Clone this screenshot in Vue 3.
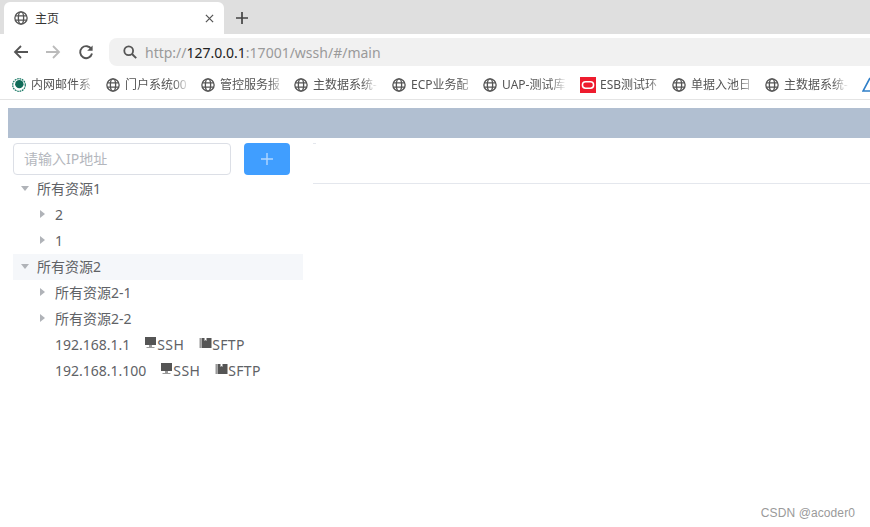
<script setup>
const bookmarks = [
  { label: '内网邮件系', icon: 'mail', width: 94 },
  { label: '门户系统00', icon: 'globe', width: 95 },
  { label: '管控服务报', icon: 'globe', width: 93 },
  { label: '主数据系统-', icon: 'globe', width: 98 },
  { label: 'ECP业务配', icon: 'globe', width: 91 },
  { label: 'UAP-测试库', icon: 'globe', width: 97 },
  { label: 'ESB测试环', icon: 'oracle', width: 92 },
  { label: '单据入池日', icon: 'globe', width: 93 },
  { label: '主数据系统-', icon: 'globe', width: 97 },
]
const tree = [
  { label: '所有资源1', level: 0, arrow: 'down' },
  { label: '2', level: 1, arrow: 'right' },
  { label: '1', level: 1, arrow: 'right' },
  { label: '所有资源2', level: 0, arrow: 'down', active: true },
  { label: '所有资源2-1', level: 1, arrow: 'right' },
  { label: '所有资源2-2', level: 1, arrow: 'right' },
  { label: '192.168.1.1', level: 1, host: true },
  { label: '192.168.1.100', level: 1, host: true },
]
</script>

<template>
  <div class="page">
    <div class="tabstrip">
      <div class="tab">
        <svg class="globe" viewBox="0 0 16 16"><g fill="none" stroke="#555" stroke-width="1.5"><circle cx="8" cy="8" r="7"/><ellipse cx="8" cy="8" rx="3" ry="7"/><path d="M1.4 5.5h13.2M1.4 10.5h13.2"/></g></svg>
        <span class="tab-title">主页</span>
        <svg class="tab-close" viewBox="0 0 10 10"><path d="M1 1l8 8M9 1l-8 8" stroke="#555" stroke-width="1.4" fill="none"/></svg>
      </div>
      <svg class="newtab" viewBox="0 0 12 12"><path d="M6 0v12M0 6h12" stroke="#444" stroke-width="1.7" fill="none"/></svg>
    </div>

    <div class="toolbar">
      <div class="navs">
        <svg viewBox="0 0 16 16"><path d="M15 8H2M8 2L2 8l6 6" stroke="#555" stroke-width="1.8" fill="none"/></svg>
        <svg viewBox="0 0 16 16"><path d="M1 8h13M8 2l6 6-6 6" stroke="#bbb" stroke-width="1.8" fill="none"/></svg>
        <svg class="reload" viewBox="0 0 16 16"><path d="M13.4 5.2A6 6 0 1 0 14 9.6" stroke="#555" stroke-width="1.9" fill="none"/><path d="M14.6 1.4v5.4H9.2z" fill="#555"/></svg>
      </div>
      <div class="omnibox">
        <svg class="search" viewBox="0 0 14 14"><circle cx="5.7" cy="5.7" r="4.4" stroke="#555" stroke-width="1.8" fill="none"/><path d="M9 9l4.2 4.2" stroke="#555" stroke-width="1.9"/></svg>
        <span class="url">http://<b>127.0.0.1</b>:17001/wssh/#/main</span>
      </div>
    </div>

    <div class="bookmarks">
      <div v-for="(b, i) in bookmarks" :key="i" class="bookmark" :style="{ width: b.width + 'px' }">
        <svg v-if="b.icon === 'globe'" class="bm-icon" viewBox="0 0 16 16"><g fill="none" stroke="#555" stroke-width="1.5"><circle cx="8" cy="8" r="7"/><ellipse cx="8" cy="8" rx="3" ry="7"/><path d="M1.4 5.5h13.2M1.4 10.5h13.2"/></g></svg>
        <svg v-else-if="b.icon === 'mail'" class="bm-icon" viewBox="0 0 16 16"><circle cx="8" cy="8" r="7.2" fill="none" stroke="#1b7a66" stroke-width="1.4" stroke-dasharray="2 .8"/><circle cx="8.4" cy="7" r="4.8" fill="#0f6b58"/></svg>
        <svg v-else class="bm-icon oracle" viewBox="0 0 16 16"><rect width="16" height="16" fill="#ee1c2e"/><rect x="2.4" y="4.8" width="11.2" height="6.4" rx="3.2" fill="none" stroke="#fff" stroke-width="1.5"/></svg>
        <span class="bm-label">{{ b.label }}</span>
      </div>
      <svg class="bm-edge" viewBox="0 0 10 16"><path d="M8 1L1 14h9" fill="none" stroke="#2f7fc8" stroke-width="1.6"/></svg>
    </div>

    <div class="app">
      <div class="banner"></div>
      <div class="main">
        <aside class="side">
          <div class="search-row">
            <input class="ip" type="text" placeholder="请输入IP地址" />
            <button class="add" type="button">
              <svg viewBox="0 0 12 12"><path d="M6 0v12M0 6h12" stroke="#b3d8ff" stroke-width="1.4" fill="none"/></svg>
            </button>
          </div>
          <div class="tree">
            <div
              v-for="(n, i) in tree"
              :key="i"
              class="node"
              :class="['lv' + n.level, { active: n.active }]"
            >
              <span class="caret" :class="n.arrow"></span>
              <span class="label">{{ n.label }}</span>
              <template v-if="n.host">
                <span class="conn first">
                  <svg viewBox="0 0 13 12"><path d="M1 0h11v8H1z" fill="#555"/><path d="M5 8h3v2h2.5v1h-8v-1H5z" fill="#999"/></svg>SSH
                </span>
                <span class="conn second">
                  <svg viewBox="0 0 12 12"><path d="M0 1h1.5v10H0z" fill="#999"/><path d="M2 1h3v3l1 -1 1 1V1h5v10H2z" fill="#555"/></svg>SFTP
                </span>
              </template>
            </div>
          </div>
        </aside>
        <section class="content">
          <div class="content-head"></div>
        </section>
      </div>
    </div>

    <div class="watermark">CSDN @acoder0</div>
  </div>
</template>

<style>
html, body { margin: 0; background: #fff; overflow: hidden; }
</style>

<style scoped>
.page {
  width: 870px;
  height: 527px;
  position: relative;
  overflow: hidden;
  background: #fff;
  font-family: "Noto Sans", "Noto Sans CJK SC", sans-serif;
}
.tabstrip {
  height: 34px;
  background: #dfdfdf;
  display: flex;
  align-items: flex-end;
  box-sizing: border-box;
  padding-left: 4px;
}
.tab {
  width: 220px;
  height: 32px;
  background: #fff;
  border-radius: 6px 6px 0 0;
  display: flex;
  align-items: center;
  box-sizing: border-box;
  padding: 0 10px;
}
.globe { width: 14px; height: 14px; flex: none; }
.tab-title { font-size: 12px; color: #333; margin-left: 7px; flex: 1; }
.tab-close { width: 9px; height: 9px; }
.newtab { width: 12px; height: 12px; margin: 0 0 10px 12px; }

.toolbar {
  height: 32px;
  display: flex;
  align-items: flex-start;
  padding-top: 4px;
  box-sizing: border-box;
}
.navs {
  width: 109px;
  height: 28px;
  flex: none;
  display: flex;
  align-items: center;
  box-sizing: border-box;
  padding-left: 13px;
  gap: 16px;
}
.navs svg { width: 16px; height: 16px; }
.navs .reload { margin-left: 1px; }
.omnibox {
  flex: 1;
  height: 28px;
  background: #f1f1f1;
  border-radius: 8px 0 0 8px;
  display: flex;
  align-items: center;
  padding-left: 14px;
}
.search { width: 14px; height: 14px; flex: none; }
.url { font-size: 14px; color: #9a9a9a; margin-left: 8px; white-space: nowrap; }
.url b { font-weight: 400; color: #222; }

.bookmarks {
  height: 34px;
  display: flex;
  align-items: center;
  box-sizing: border-box;
  padding: 4px 0 0 12px;
  border-bottom: 1px solid #e4e4e4;
  overflow: hidden;
}
.bookmark {
  flex: none;
  display: flex;
  align-items: center;
  overflow: hidden;
}
.bm-icon { width: 14px; height: 14px; flex: none; }
.bm-icon.oracle { width: 16px; height: 16px; margin-right: -1px; }
.bm-label {
  font-size: 12px;
  line-height: 16px;
  padding-top: 1px;
  color: #555;
  margin-left: 5px;
  width: 65px;
  white-space: nowrap;
  overflow: hidden;
  -webkit-mask-image: linear-gradient(90deg, #000 48px, transparent 65px);
  mask-image: linear-gradient(90deg, #000 48px, transparent 65px);
}
.bm-edge { width: 10px; height: 16px; flex: none; }

.app { padding: 8px 0 0 8px; }
.banner { height: 30px; background: #b1bfd1; }
.main { display: flex; }
.side { width: 305px; flex: none; padding-top: 5px; }
.search-row { display: flex; padding-left: 5px; gap: 13px; }
.ip {
  width: 218px;
  height: 32px;
  box-sizing: border-box;
  border: 1px solid #dcdfe6;
  border-radius: 4px;
  padding: 0 10px 2px;
  font: 14px "Noto Sans", "Noto Sans CJK SC", sans-serif;
  color: #606266;
  outline: none;
}
.ip::placeholder { color: #b4b7bd; opacity: 1; }
.add {
  width: 46px;
  height: 32px;
  background: #409eff;
  border: 0;
  border-radius: 4px;
  padding: 0;
  display: flex;
  align-items: center;
  justify-content: center;
}
.add svg { width: 12px; height: 12px; }
.tree { margin: 1px 0 0 5px; width: 290px; font-size: 14px; color: #606266; }
.node { height: 26px; display: flex; align-items: center; white-space: nowrap; line-height: 24px; padding-bottom: 1px; box-sizing: border-box; }
.node.active { background: #f5f7fa; }
.lv0 { padding-left: 8px; }
.lv1 { padding-left: 26px; }
.caret {
  width: 16px;
  flex: none;
  height: 10px;
  position: relative;
}
.caret.down::before {
  content: "";
  position: absolute;
  left: 0;
  top: 2px;
  border: 4px solid transparent;
  border-top: 5px solid #b0b3b8;
  border-bottom: 0;
}
.caret.right::before {
  content: "";
  position: absolute;
  left: 1px;
  top: 0;
  border: 4px solid transparent;
  border-left: 5px solid #b0b3b8;
  border-right: 0;
}
.conn { display: inline-flex; align-items: center; letter-spacing: 0.35px; }
.conn svg { width: 13px; height: 12px; flex: none; margin-top: -3px; }
.conn.first { margin-left: 14px; }
.conn.second { margin-left: 15px; }
.content { flex: 1; padding-top: 5px; position: relative; }
.content::before {
  content: "";
  position: absolute;
  left: 0;
  top: 5px;
  width: 3px;
  height: 1px;
  background: #e4e7ed;
}
.content-head { height: 40px; border-bottom: 1px solid #e4e7ed; }
.watermark {
  position: absolute;
  right: 15px;
  bottom: 7px;
  font-family: "Liberation Sans", sans-serif;
  font-size: 12px;
  color: #9a9a9a;
  letter-spacing: 0.1px;
}
</style>
